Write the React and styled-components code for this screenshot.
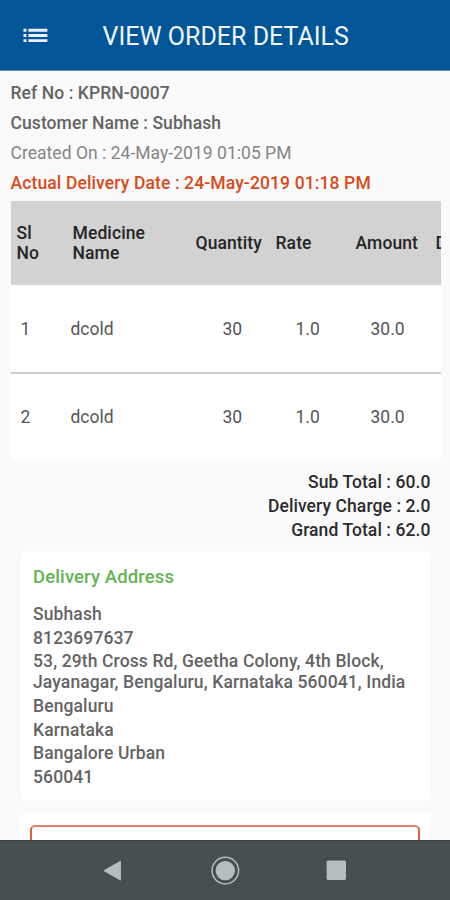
import React from 'react';
import styled, { createGlobalStyle } from 'styled-components';

const items = [
    { no: 1, name: 'dcold', quantity: '30', rate: '1.0', amount: '30.0' },
    { no: 2, name: 'dcold', quantity: '30', rate: '1.0', amount: '30.0' },
];

const address = [
    'Subhash',
    '8123697637',
    '53, 29th Cross Rd, Geetha Colony, 4th Block, Jayanagar, Bengaluru, Karnataka 560041, India',
    'Bengaluru',
    'Karnataka',
    'Bangalore Urban',
    '560041',
];

function App() {
    return (
        <Screen>
            <GlobalStyle />
            <TopBar>
                <MenuIcon viewBox='0 0 25 16'>
                    <path d='M.5 .8h3v2.9h-3zM5.4 .8h19v2.9h-19zM.5 6h3v2.9h-3zM5.4 6h19v2.9h-19zM.5 11.2h3v2.9h-3zM5.4 11.2h19v2.9h-19z' />
                </MenuIcon>
                <Title>VIEW ORDER DETAILS</Title>
            </TopBar>

            <Content>
                <OrderInfo>
                    <InfoLine>Ref No : KPRN-0007</InfoLine>
                    <InfoLine>Customer Name : Subhash</InfoLine>
                    <InfoLine $color='#858585' $weight={400} $spacing='0.03px'>Created On : 24-May-2019 01:05 PM</InfoLine>
                    <InfoLine $color='#d94b1c' $spacing='0.12px'>Actual Delivery Date : 24-May-2019 01:18 PM</InfoLine>
                </OrderInfo>

                <Table>
                    <HeadRow>
                        <div>Sl<br />No</div>
                        <div>Medicine<br />Name</div>
                        <div>Quantity</div>
                        <div>Rate</div>
                        <div>Amount</div>
                        <div>D</div>
                    </HeadRow>
                    {items.map((item) => (
                        <ItemRow key={item.no}>
                            <div>{item.no}</div>
                            <div>{item.name}</div>
                            <div>{item.quantity}</div>
                            <div>{item.rate}</div>
                            <div>{item.amount}</div>
                        </ItemRow>
                    ))}
                </Table>

                <Totals>
                    <p>Sub Total : 60.0</p>
                    <p>Delivery Charge : 2.0</p>
                    <p>Grand Total : 62.0</p>
                </Totals>

                <AddressCard>
                    <h2>Delivery Address</h2>
                    {address.map((line, i) => <p key={i}>{line}</p>)}
                </AddressCard>

                <ActionCard>
                    <OutlineBox />
                </ActionCard>
            </Content>

            <NavBar>
                <NavIcon viewBox='0 0 30 30'>
                    <path d='M5 14.7 21.4 5.3V24.1z' strokeLinejoin='round' stroke='#b6bdbf' strokeWidth='1' />
                </NavIcon>
                <NavIcon viewBox='0 0 30 30'>
                    <circle cx='15.3' cy='14.6' r='13.3' fill='none' stroke='#b6bdbf' strokeWidth='1.5' />
                    <circle cx='15.3' cy='14.6' r='9.7' />
                </NavIcon>
                <NavIcon viewBox='0 0 30 30'>
                    <rect x='5.6' y='4.6' width='19.4' height='19.4' rx='1.5' />
                </NavIcon>
            </NavBar>
        </Screen>
    );
}

const GlobalStyle = createGlobalStyle`
  * {
    box-sizing: border-box;
  }

  body {
    margin: 0;
    font-family: Roboto, sans-serif;
    font-size: 17.5px;
    line-height: 20.5px;
  }

  p, h1, h2 {
    margin: 0;
  }
`;

const Screen = styled.div`
  display: flex;
  flex-direction: column;
  width: 450px;
  height: 900px;
  overflow: hidden;
  background: #fafafa;
`;

const TopBar = styled.header`
  display: flex;
  align-items: center;
  flex: none;
  height: 71px;
  padding: 3px 0 0 23px;
  background: #015697;
  border-bottom: 1px solid #6a82b0;
`;

const MenuIcon = styled.svg`
  width: 25px;
  height: 16px;
  margin-bottom: 2px;
  fill: #eeeeff;
`;

const Title = styled.h1`
  margin-left: 54.5px;
  color: #f2f5ff;
  font-size: 25px;
  font-weight: 400;
  line-height: 30px;
  white-space: nowrap;
`;

const Content = styled.main`
  flex: 1;
  min-height: 0;
  overflow: hidden;
`;

const OrderInfo = styled.section`
  padding: 7px 0 3px 10.5px;
`;

const InfoLine = styled.p`
  height: 30px;
  line-height: 30px;
  color: ${(props) => props.$color || '#646464'};
  font-weight: ${(props) => props.$weight || 500};
  letter-spacing: ${(props) => props.$spacing || '0.08px'};
  white-space: nowrap;
`;

const Table = styled.section`
  width: 430px;
  margin-left: 10.5px;
  overflow: hidden;
  background: #fff;
`;

const HeadRow = styled.div`
  display: grid;
  grid-template-columns: 56px 123px 80px 80px 80px 90px;
  align-items: center;
  height: 84px;
  padding-left: 6px;
  background: #d2d2d2;
  color: #252525;
  font-weight: 500;
  letter-spacing: 0.1px;
`;

const ItemRow = styled.div`
  display: grid;
  grid-template-columns: 50px 152px 73px 75px 80px;
  align-items: center;
  height: 87px;
  padding: 1px 0 0 10px;
  color: #555;

  & + & {
    height: 88px;
    padding-top: 0;
    border-top: 2px solid #d0d0d0;
  }
`;

const Totals = styled.section`
  padding: 10px 19.5px 0 0;
  color: #2c2c2c;
  font-weight: 500;
  line-height: 24px;
  letter-spacing: 0.08px;
  text-align: right;
`;

const AddressCard = styled.section`
  width: 411px;
  height: 250px;
  margin: 9px 0 0 20px;
  padding: 16px 10px 0 13px;
  background: #fff;
  border-radius: 5px;
  box-shadow: 0 0 2px rgba(0, 0, 0, 0.06);
  color: #646464;
  font-weight: 500;
  letter-spacing: 0.12px;

  h2 {
    margin-bottom: 16.4px;
    color: #64b554;
    font-size: 18.5px;
    font-weight: 500;
  }

  p {
    margin-bottom: 3.3px;
  }
`;

const ActionCard = styled.section`
  width: 411px;
  height: 80px;
  margin: 12px 0 0 20px;
  padding: 12px 11px 0 10px;
  background: #fff;
  border-radius: 5px;
`;

const OutlineBox = styled.div`
  height: 60px;
  border: 2px solid #dc6242;
  border-top-color: #e08070;
  border-radius: 5px;
`;

const NavBar = styled.nav`
  display: flex;
  align-items: center;
  justify-content: center;
  gap: 81px;
  flex: none;
  height: 60px;
  background: #464e52;
  border-top: 1px solid #343d42;
`;

const NavIcon = styled.svg`
  width: 30px;
  height: 30px;
  fill: #b6bdbf;
`;

export default App;
